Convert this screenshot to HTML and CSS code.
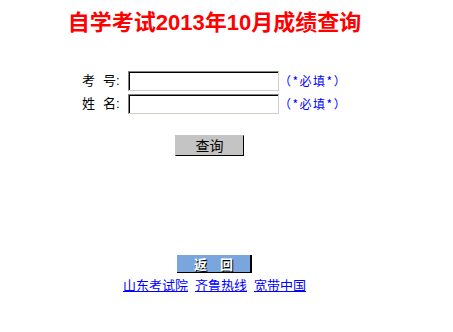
FILE: index.html
```html
<!DOCTYPE html>
<html lang="zh-CN">
<head>
<meta charset="utf-8">
<title>自学考试2013年10月成绩查询</title>
<link rel="stylesheet" href="styles.css">
</head>
<body>
<div class="page">
  <h1 class="title">自学考试2013年10月成绩查询</h1>
  <form class="form">
    <div class="row">
      <label class="label">考<span class="sp"></span>号:</label>
      <input class="field" type="text">
      <span class="note">（*必填*）</span>
    </div>
    <div class="row">
      <label class="label">姓<span class="sp"></span>名:</label>
      <input class="field" type="text">
      <span class="note">（*必填*）</span>
    </div>
    <div class="submit-row">
      <button class="btn-query" type="button">查询</button>
    </div>
  </form>
  <div class="back-row">
    <span class="btn-back">返<span class="gap"></span>回</span>
  </div>
  <div class="links">
    <a href="#">山东考试院</a>
    <a href="#">齐鲁热线</a>
    <a href="#">宽带中国</a>
  </div>
</div>
</body>
</html>
```

FILE: styles.css
```css
html, body {
  margin: 0;
  padding: 0;
  background: #ffffff;
}

body {
  font-family: "Liberation Sans", "Noto Sans CJK SC", sans-serif;
  font-size: 13px;
  color: #000000;
}

.page {
  width: 429px;
}

.title {
  margin: 0;
  padding-top: 8px;
  text-align: center;
  font-size: 22px;
  line-height: 30px;
  font-weight: bold;
  color: #ff0000;
}

.form {
  margin: 33px 0 0 0;
}

.row {
  display: flex;
  align-items: center;
  height: 20px;
  margin-bottom: 3px;
}

.label {
  width: 121px;
  padding-left: 82px;
  box-sizing: border-box;
  font-size: 13px;
  line-height: 20px;
  white-space: nowrap;
}

.sp {
  display: inline-block;
  width: 8px;
}

.field {
  width: 151px;
  height: 20px;
  box-sizing: border-box;
  margin: 0 0 0 7px;
  padding: 0;
  border: 1px solid;
  border-color: #808080 #d4d0c8 #d4d0c8 #808080;
  box-shadow: inset 1px 1px 0 #000000;
  background: #ffffff;
}

.note {
  margin-left: 0;
  color: #0000ff;
  font-family: "Noto Sans CJK SC", sans-serif;
  font-size: 12px;
  line-height: 20px;
  letter-spacing: 1.5px;
}

.submit-row {
  display: flex;
  justify-content: center;
  padding: 18px 0 0 0;
  margin-left: -10px;
}

.btn-query {
  width: 69px;
  height: 21px;
  box-sizing: border-box;
  padding: 0;
  margin: 0;
  background: #c4c4c4;
  border: 1px solid;
  border-color: #c4c4c4 #000000 #000000 #c4c4c4;
  font-family: "Noto Sans CJK SC", sans-serif;
  font-size: 14px;
  line-height: 19px;
  color: #000000;
}

.back-row {
  display: flex;
  justify-content: center;
  margin-top: 99px;
}

.btn-back {
  display: flex;
  align-items: center;
  justify-content: center;
  width: 75px;
  height: 18px;
  box-sizing: border-box;
  background: #7aa6dd;
  border-right: 2px solid #000000;
  border-bottom: 1px solid #000000;
  font-family: "Noto Sans CJK SC", sans-serif;
  font-size: 13px;
  font-weight: bold;
  color: #ffffff;
  text-shadow: 1px 1px 0 #000000;
}

.gap {
  display: inline-block;
  width: 13px;
}

.links {
  display: flex;
  justify-content: center;
  gap: 7px;
  margin-top: 3px;
  font-family: "Noto Sans CJK SC", sans-serif;
  font-size: 13px;
  line-height: 18px;
}

.links a {
  color: #0000ff;
  text-decoration: underline;
}
```
